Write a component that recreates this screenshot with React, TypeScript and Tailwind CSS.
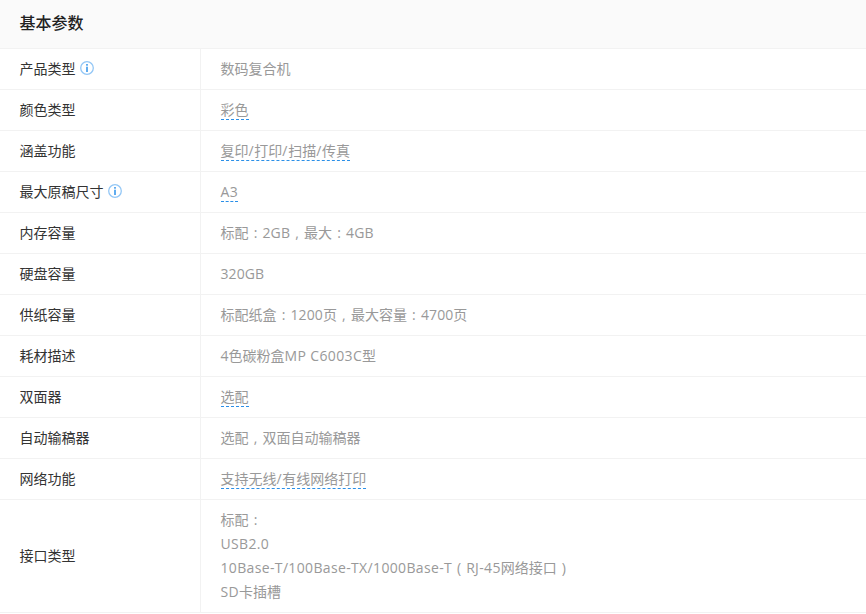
const Info = () => (
  <svg width="14" height="14" viewBox="0 0 14 14" className="ml-[4.5px] shrink-0" fill="none">
    <circle cx="7" cy="7" r="6.3" stroke="#93c7f6" strokeWidth="1.3" />
    <rect x="6.1" y="3" width="1.8" height="1.7" fill="#4fa3ee" />
    <rect x="6.1" y="5.7" width="1.8" height="5.3" fill="#4fa3ee" />
  </svg>
);

type Row = { k: string; v: string; info?: boolean; dash?: boolean };

const rows: Row[] = [
  { k: "产品类型", v: "数码复合机", info: true },
  { k: "颜色类型", v: "彩色", dash: true },
  { k: "涵盖功能", v: "复印/打印/扫描/传真", dash: true },
  { k: "最大原稿尺寸", v: "A3", info: true, dash: true },
  { k: "内存容量", v: "标配：2GB，最大：4GB" },
  { k: "硬盘容量", v: "320GB" },
  { k: "供纸容量", v: "标配纸盒：1200页，最大容量：4700页" },
  { k: "耗材描述", v: "4色碳粉盒MP C6003C型" },
  { k: "双面器", v: "选配", dash: true },
  { k: "自动输稿器", v: "选配，双面自动输稿器" },
  { k: "网络功能", v: "支持无线/有线网络打印", dash: true },
];

const ports = ["标配：", "USB2.0", "10Base-T/100Base-TX/1000Base-T（RJ-45网络接口）", "SD卡插槽"];

const centred: Record<string, string> = { "（": "(", "）": ")", "：": ":", "，": "," };

const Txt = ({ s }: { s: string }) => (
  <>
    {s.split(/([：，（）]|[A-Za-z0-9 .\-\/]+)/).filter(Boolean).map((part, i) => {
      if (centred[part]) return <span key={i} className="inline-block w-[14px] text-center">{centred[part]}</span>;
      if (part === "/") return <span key={i} className="tracking-[0.7px]">{part}</span>;
      if (/^\d+(GB)?$/.test(part)) return <span key={i} className="tracking-[0.1px]">{part}</span>;
      if (/^[A-Za-z0-9 .\-\/]/.test(part)) return <span key={i} className="tracking-[0.35px]">{part}</span>;
      return <span key={i}>{part}</span>;
    })}
  </>
);

export default function App() {
  return (
    <div className="w-[866px] h-[614px] overflow-hidden bg-white font-['Open_Sans','Noto_Sans_CJK_SC',sans-serif] text-[14px]">
      <div className="h-[49px] bg-[#fafafa] border-b border-[#f2f2f2] pl-[19.5px] pb-[2px] flex items-center">
        <h2 className="text-[16px] font-medium leading-[24px] text-[#222]">基本参数</h2>
      </div>
      {rows.map((r) => (
        <div key={r.k} className="flex h-[41px] border-b border-[#f2f2f2]">
          <div className="w-[201px] shrink-0 border-r border-[#f2f2f2] pl-[19.5px] pb-[2px] flex items-center text-[#333]">
            <span>{r.k}</span>
            {r.info && <Info />}
          </div>
          <div className={r.dash ? "pl-[19.5px] flex items-center text-[#999]" : "pl-[19.5px] pb-[2px] flex items-center text-[#999]"}>
            <span className={r.dash ? "border-b border-dashed border-[#2a8fe8] leading-[19px]" : ""}>
              <Txt s={r.v} />
            </span>
          </div>
        </div>
      ))}
      <div className="flex h-[113px] border-b border-[#f2f2f2]">
        <div className="w-[201px] shrink-0 border-r border-[#f2f2f2] pl-[19.5px] pb-[2px] flex items-center text-[#333]">接口类型</div>
        <div className="pl-[19.5px] flex flex-col justify-center text-[#999] leading-[24px]">
          {ports.map((p) => (
            <div key={p} className="h-[24px] whitespace-nowrap">
              <Txt s={p} />
            </div>
          ))}
        </div>
      </div>
    </div>
  );
}
